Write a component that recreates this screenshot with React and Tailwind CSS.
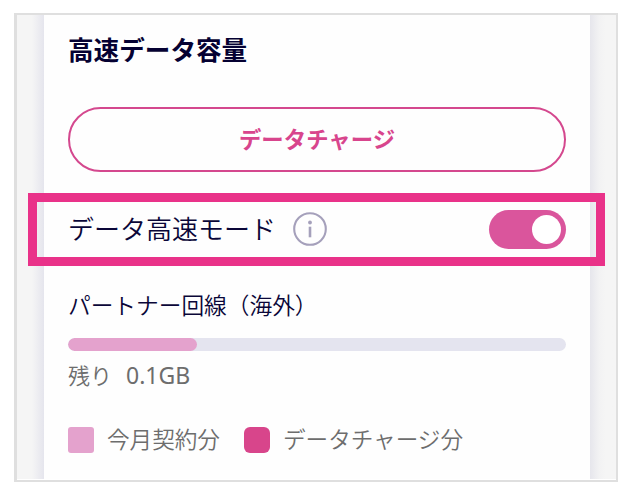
const usage = { remaining: '0.1GB', percent: 25.9 }

const legend = [
  { label: '今月契約分', swatch: 'rounded-[3px] bg-[#e4a2cd]' },
  { label: 'データチャージ分', swatch: 'rounded-[6px] bg-[#d8458b]' },
]

function InfoIcon() {
  return (
    <svg className="mb-px ml-[17px] h-[34px] w-[34px] shrink-0" viewBox="0 0 34 34" fill="none">
      <circle cx="17" cy="17" r="15.8" stroke="#a5a0bb" strokeWidth="2.1" />
      <circle cx="17" cy="10.5" r="1.9" fill="#a5a0bb" />
      <path d="M17 14.7V25.3" stroke="#a5a0bb" strokeWidth="2.6" />
    </svg>
  )
}

function Toggle() {
  return (
    <button
      role="switch"
      aria-checked="true"
      aria-label="データ高速モード"
      className="ml-auto flex h-[39px] w-[77px] items-center justify-end rounded-full bg-[#da559c] pr-[5px]"
    >
      <span className="h-[29px] w-[29px] rounded-full bg-white" />
    </button>
  )
}

function App() {
  return (
    <div className="h-[496px] w-[634px] bg-white pt-[13px] pl-[14px] font-['Noto_Sans_CJK_JP','Noto_Sans',sans-serif] font-[350] text-[#0a0638]">
      <div className="relative h-[469px] w-[604px] border-2 border-l-3 border-[#dfdfdf] pb-px">
        <div className="flex h-full bg-[#f5f5f5]">
          <div className="ml-auto w-[12px] bg-linear-to-r from-[#f5f5f5] to-[#e5e5ed]" />
          <main className="flex w-[546px] shrink-0 flex-col bg-[#fefefe] px-6">
            <h2 className="mt-4 h-9 text-[25.6px] leading-9 font-bold text-[#050132]">高速データ容量</h2>

            <button className="mt-10 h-[65px] shrink-0 rounded-full border-2 border-[#d4488e] pb-0.5 text-[22.4px] font-bold text-[#d8458d]">
              データチャージ
            </button>

            <div className="mt-[38px] flex h-[39px] items-center">
              <span className="pb-1 text-[26px] leading-9">データ高速モード</span>
              <InfoIcon />
              <Toggle />
            </div>

            <h3 className="mt-10 h-8 text-[22.7px] leading-8 font-[350]">パートナー回線（海外）</h3>
            <div className="mt-[17px] h-[13px] overflow-hidden rounded-full bg-[#e4e4ef]">
              <div className="h-full rounded-full bg-[#e4a2cd]" style={{ width: `${usage.percent}%` }} />
            </div>
            <p className="mt-[7px] flex h-8 gap-[14px] text-[22px] leading-8 text-[#6d6d6d]">
              <span>残り</span>
              <span className="pt-px font-['Noto_Sans'] text-[23px] font-normal">{usage.remaining}</span>
            </p>

            <ul className="mt-[37px] flex h-[26px] items-center gap-6 text-[22.6px] leading-[26px] text-[#6d6d6d]">
              {legend.map((item) => (
                <li key={item.label} className="flex items-center gap-[13px]">
                  <span className={`h-[26px] w-[26px] ${item.swatch}`} />
                  <span className="pb-0.5">{item.label}</span>
                </li>
              ))}
            </ul>
          </main>
          <div className="w-[26px] shrink-0 bg-linear-to-r from-[#e6e6ec] via-[#f2f2f3] via-35% to-[#f5f5f5] to-60%" />
        </div>

        {/* highlight around the high-speed mode row */}
        <div className="pointer-events-none absolute top-[178px] left-[11px] h-[73px] w-[577px] border-9 border-[#e93289]" />
      </div>
    </div>
  )
}

export default App
